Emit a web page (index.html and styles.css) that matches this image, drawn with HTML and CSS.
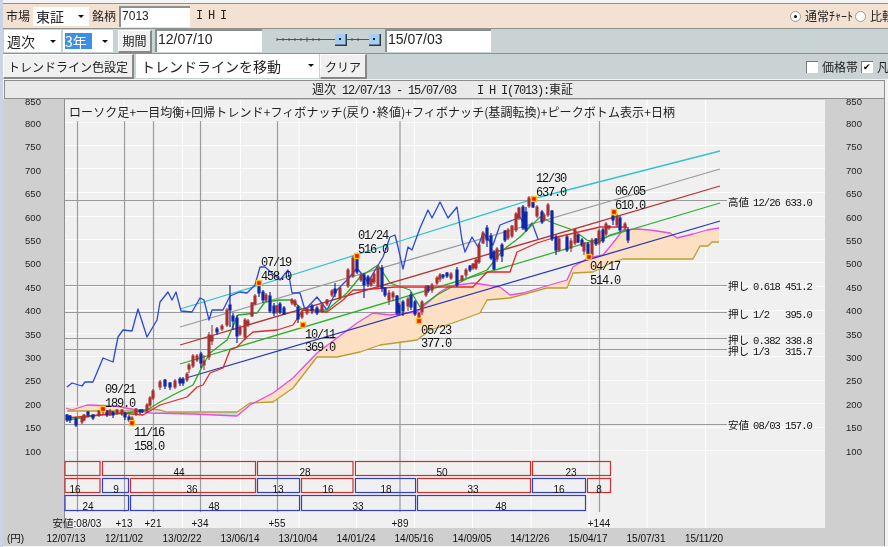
FILE: index.html
```html
<!DOCTYPE html>
<html lang="ja">
<head>
<meta charset="utf-8">
<title>チャート</title>
<link rel="stylesheet" href="styles.css">
</head>
<body>
<div class="app">
  <div class="bar bar-market">
    <span class="lbl market-lbl">市場</span>
    <div class="sel sel-market"><span>東証</span><i class="arrow"></i></div>
    <span class="lbl">銘柄</span>
    <div class="field code">7013</div>
    <span class="name">I H I</span>
    <div class="spring"></div>
    <span class="radio on"></span><span class="lbl radio-lbl">通常ﾁｬｰﾄ</span>
    <span class="radio"></span><span class="lbl last-a">比較</span>
  </div>
  <div class="bar bar-period">
    <div class="sel sel-cycle"><span>週次</span><i class="arrow"></i></div>
    <div class="sel sel-span"><span class="picked">3年</span><i class="arrow"></i></div>
    <div class="btn btn-period">期間</div>
    <div class="field date">12/07/10</div>
    <svg class="slider" viewBox="0 0 122 24" width="122" height="24">
      <path class="slider-track" d="M15 10.5H110M15 9v3M21 9v3M27 9v3M33 9v3M39 9v3M45 8v5M51 9v3M57 9v3M90 9v3M96 9v3"/>
      <rect class="knob-shade" x="73" y="5" width="12" height="12"/><rect class="knob" x="73" y="5" width="10.500" height="10.500"/><rect class="knob-dot" x="77" y="9" width="2" height="2"/>
      <rect class="knob-shade" x="107" y="5" width="12" height="12"/><rect class="knob" x="107" y="5" width="10.500" height="10.500"/><rect class="knob-dot" x="111" y="9" width="2" height="2"/>
    </svg>
    <div class="field date date-end">15/07/03</div>
  </div>
  <div class="bar bar-tool">
    <div class="btn btn-color">トレンドライン色設定</div>
    <div class="sel sel-move"><span>トレンドラインを移動</span><i class="arrow"></i></div>
    <div class="btn btn-clear">クリア</div>
    <div class="spring"></div>
    <span class="check"></span><span class="lbl check-lbl">価格帯</span>
    <span class="check on">✔</span><span class="lbl last-b">凡例</span>
  </div>
  <div class="heading"><span class="jp">週次</span> 12/07/13 - 15/07/03<span class="head-name">I H I</span>(7013):<span class="jp">東証</span></div>
  <svg class="chart" viewBox="3 99 882 447" width="882" height="447">
    <rect class="plot" x="65" y="100" width="760" height="428"/>
    <path class="edge" d="M64.500 99V528M884.500 99V546"/>
    <path class="grid" d="M124 100V528M182.500 100V528M240.500 100V528M299 100V528M356.500 100V528M414.500 100V528M472.500 100V528M531 100V528M589 100V528M647 100V528M705.500 100V528M65 122.500H825M65 145.500H825M65 168.500H825M65 192.500H825M65 216.500H825M65 239.500H825M65 262.500H825M65 286.500H825M65 310.500H825M65 333.500H825M65 356.500H825M65 380.500H825M65 403.500H825M65 427.500H825M65 450.500H825"/>
    <path class="fibo" d="M77.500 121V512M124.500 121V512M153.500 121V512M200.500 121V512M277.500 121V512M400 121V512M599.500 121V512"/>
    <path class="fibo" d="M65 200.500H727M65 285.500H727M65 312.500H727M65 338.500H727M65 349.500H727M65 424.500H727"/>

    <path class="cloud" d="M66 408L87 405L137 410L150 411L150 411L137 411L67 411Z"/>
    <path class="cloud-cold" d="M150 411L167 412L237 412L237 416L193 414L150 413Z"/>
    <path class="cloud" d="M237 416L250 405L273 393L293 378L317 353L337 338L357 323L373 313L390 315L417 312L440 292L450 286L473 283L500 287L510 295L523 293L543 287L567 280L573 267L588 258L603 255L613 243L623 230L637 229L650 230L670 233L677 238L693 234L707 230L719 228L719 242L712 242L708 246L700 246L693 259L623 259L613 262L593 272L573 273L567 288L547 288L510 298L487 300L480 313L453 323L430 330L417 340L380 345L360 352L337 357L317 357L293 388L273 402L250 403L237 412Z"/>
    <path class="l-olive" d="M67 411L137 411L150 409L160 410L167 412L237 412L250 403L273 402L293 388L317 357L337 357L360 352L380 345L417 340L430 330L453 323L480 313L487 300L510 298L547 288L567 288L573 273L593 272L613 262L623 259L693 259L700 246L708 246L712 242L719 242"/>
    <path class="l-magenta" d="M66 408L72 410L87 405L115 406L137 410L150 413L193 414L237 416L250 405L273 393L293 378L317 353L337 338L357 323L373 313L390 315L417 312L440 292L450 286L473 283L500 287L510 295L523 293L543 287L567 280L573 267L588 258L603 255L613 243L623 230L637 229L650 230L670 233L677 238L693 234L707 230L719 228"/>

    <path class="l-cyan" d="M180 309L260 285L400 241L540 197L720 151"/>
    <path class="l-gray" d="M180 327L720 169"/>
    <path class="l-red" d="M180 345L720 186"/>
    <path class="l-green" d="M180 364L720 203"/>
    <path class="l-blue" d="M186 378L720 221"/>

    <path class="l-chikou" d="M67 387L72 383L82 386L85 382L93 382L103 358L113 362L118 337L123 330L132 331L138 309L147 337L157 320L160 302L168 292L172 300L176 292L181 311L192 312L200 298L204 300L209 320L212 310L223 310L230 296L240 292L247 293L255 285L260 267L265 267L280 280L288 270L292 293L300 293L305 310L317 297L327 310L337 290L347 280L357 268L368 282L383 257L390 237L395 235L398 247L403 269L408 247L412 250L420 228L428 210L432 218L440 202L448 218L457 207L462 240L465 252L472 237L478 247L483 233L493 245L500 225L513 220L520 217L527 230L532 223L538 239"/>
    <path class="l-tenkan" d="M67 420L100 415L127 413L147 410L160 402L173 395L193 385L203 365L210 353L227 340L238 315L257 313L265 302L280 300L292 300L303 310L327 310L347 293L360 277L378 265L390 283L410 290L420 307L437 295L470 277L487 270L503 250L520 237L540 217L553 223L573 230L587 240L597 243L610 235L627 230"/>
    <path class="l-kijun" d="M67 418L120 413L143 415L160 405L187 397L197 387L203 385L210 373L223 368L230 350L237 347L247 337L253 332L277 330L293 325L303 310L327 312L343 300L353 290L360 290L395 287L415 287L473 287L487 272L510 272L517 252L537 243L553 238L600 227L627 227"/>

    <path class="candle-b" d="M67 414V422M66 415h2V420h-2zM70 415V423M69 416h2V420h-2zM76 417V427M75 419h2V425h-2zM88 411V417M87 412h2V415h-2zM93 414V420M92 415h2V418h-2zM107 410V417M106 411h2V415h-2zM113 411V418M112 412h2V415h-2zM125 412V420M124 413h2V417h-2zM129 415V422M128 417h2V420h-2zM140 409V414M139 410h2V412h-2zM142 409V413M141 410h2V412h-2zM165 379V389M164 380h2V386h-2zM170 382V390M169 383h2V387h-2zM180 377V386M179 379h2V383h-2zM183 377V386M182 379h2V383h-2zM201 352V368M200 354h2V363h-2zM217 327V335M216 329h2V332h-2zM230 285V327M229 305h2V310h-2zM233 313V330M232 316h2V321h-2zM237 315V343M236 318h2V336h-2zM259 283V297M258 285h2V293h-2zM263 290V303M262 292h2V300h-2zM270 292V313M269 296h2V311h-2zM274 303V316M273 306h2V313h-2zM280 302V314M279 304h2V312h-2zM284 306V315M283 308h2V314h-2zM298 305V323M297 307h2V319h-2zM312 304V314M311 306h2V310h-2zM317 306V315M316 308h2V313h-2zM335 283V297M334 289h2V293h-2zM357 256V274M356 257h2V272h-2zM364 273V298M363 275h2V285h-2zM368 275V287M367 277h2V284h-2zM382 265V292M381 268h2V288h-2zM385 287V297M384 288h2V295h-2zM397 295V315M396 296h2V313h-2zM399 303V315M398 305h2V313h-2zM403 300V316M402 302h2V311h-2zM411 292V310M410 295h2V307h-2zM415 300V316M414 302h2V314h-2zM428 285V293M427 287h2V291h-2zM443 274V279M442 275h2V277h-2zM447 272V278M446 273h2V276h-2zM457 267V287M456 270h2V285h-2zM470 265V272M469 266h2V270h-2zM487 225V247M486 228h2V240h-2zM491 233V260M490 236h2V258h-2zM494 250V270M493 252h2V269h-2zM502 243V262M501 245h2V256h-2zM505 230V242M504 231h2V240h-2zM523 205V230M522 207h2V228h-2zM526 207V232M525 212h2V230h-2zM533 199V208M532 200h2V207h-2zM542 210V224M541 212h2V222h-2zM552 210V241M551 211h2V239h-2zM556 235V255M555 237h2V250h-2zM567 235V252M566 237h2V250h-2zM578 234V243M577 235h2V242h-2zM582 238V247M581 240h2V245h-2zM588 242V257M587 244h2V256h-2zM596 238V246M595 239h2V244h-2zM603 228V243M602 230h2V241h-2zM613 212V225M612 216h2V220h-2zM620 216V232M619 218h2V230h-2zM628 227V243M627 230h2V240h-2z"/>
    <path class="candle-r" d="M82 416V424M81 418h2V422h-2zM84 414V421M83 415h2V420h-2zM99 410V417M98 411h2V415h-2zM103 407V414M102 408h2V412h-2zM110 409V416M109 411h2V415h-2zM117 409V415M116 410h2V413h-2zM122 409V416M121 410h2V414h-2zM132 416V425M131 418h2V423h-2zM136 408V416M135 409h2V414h-2zM147 403V413M146 405h2V411h-2zM150 396V407M149 398h2V405h-2zM153 389V400M152 391h2V398h-2zM160 380V390M159 382h2V387h-2zM175 379V389M174 381h2V387h-2zM187 372V382M186 374h2V380h-2zM189 363V373M188 365h2V369h-2zM193 354V368M192 356h2V366h-2zM197 354V362M196 356h2V360h-2zM204 355V370M203 361h2V365h-2zM209 332V360M208 335h2V357h-2zM212 325V345M211 336h2V341h-2zM222 324V331M221 326h2V329h-2zM227 308V327M226 310h2V325h-2zM240 325V336M239 328h2V334h-2zM245 318V340M244 320h2V337h-2zM248 319V327M247 321h2V325h-2zM252 302V317M251 303h2V316h-2zM255 294V305M254 296h2V304h-2zM266 293V302M265 295h2V300h-2zM277 305V314M276 306h2V312h-2zM292 298V305M291 300h2V303h-2zM295 299V307M294 301h2V305h-2zM302 310V319M301 312h2V317h-2zM307 307V315M306 308h2V313h-2zM322 304V313M321 305h2V311h-2zM327 299V306M326 300h2V304h-2zM332 289V297M331 291h2V295h-2zM340 287V300M339 288h2V298h-2zM348 268V288M347 270h2V286h-2zM353 256V278M352 258h2V276h-2zM361 273V282M360 275h2V280h-2zM371 277V287M370 279h2V285h-2zM374 272V284M373 274h2V282h-2zM378 265V288M377 268h2V286h-2zM389 290V305M388 293h2V300h-2zM393 291V301M392 293h2V297h-2zM408 297V311M407 299h2V306h-2zM419 312V322M418 313h2V317h-2zM422 300V315M421 302h2V312h-2zM426 285V297M425 287h2V295h-2zM432 283V293M431 285h2V290h-2zM437 276V285M436 278h2V283h-2zM440 273V282M439 275h2V279h-2zM451 272V280M450 274h2V278h-2zM462 275V282M461 276h2V280h-2zM466 268V278M465 270h2V275h-2zM473 263V270M472 264h2V268h-2zM476 258V270M475 260h2V268h-2zM479 243V264M478 245h2V262h-2zM483 231V244M482 233h2V243h-2zM497 247V262M496 249h2V259h-2zM508 228V240M507 230h2V238h-2zM512 225V238M511 226h2V236h-2zM516 212V232M515 214h2V230h-2zM519 207V220M518 208h2V218h-2zM529 196V208M528 198h2V206h-2zM537 205V218M536 207h2V216h-2zM544 213V222M543 215h2V220h-2zM548 203V217M547 205h2V215h-2zM559 237V252M558 239h2V250h-2zM571 238V252M570 241h2V248h-2zM575 228V245M574 230h2V243h-2zM584 242V255M583 243h2V251h-2zM592 238V258M591 240h2V255h-2zM599 229V245M598 231h2V243h-2zM609 225V230M608 226h2V228h-2zM606 222V236M605 224h2V234h-2zM625 222V230M624 224h2V228h-2zM617 214V227M616 216h2V225h-2z"/>

    <g class="marks">
      <rect x="100.500" y="406.500" width="5" height="5"/><rect x="129.500" y="420.500" width="5" height="5"/>
      <rect x="256.500" y="280.500" width="5" height="5"/><rect x="300.500" y="322.500" width="5" height="5"/>
      <rect x="354.500" y="253.500" width="5" height="5"/><rect x="416.500" y="318.500" width="5" height="5"/>
      <rect x="531.500" y="196.500" width="5" height="5"/><rect x="586.500" y="254.500" width="5" height="5"/>
      <rect x="611.500" y="209.500" width="5" height="5"/>
    </g>

    <text class="title" x="69" y="117" textLength="606">ローソク足+一目均衡+回帰トレンド+フィボナッチ(戻り･終値)+フィボナッチ(基調転換)+ピークボトム表示+日柄</text>

    <g class="mono">
      <text x="105" y="393">09/21</text><text x="105" y="407">189.0</text>
      <text x="134" y="436">11/16</text><text x="134" y="450">158.0</text>
      <text x="261" y="266">07/19</text><text x="261" y="280">458.0</text>
      <text x="305" y="338">10/11</text><text x="305" y="351">369.0</text>
      <text x="358" y="239">01/24</text><text x="358" y="253">516.0</text>
      <text x="421" y="334">05/23</text><text x="421" y="347">377.0</text>
      <text x="536" y="182">12/30</text><text x="536" y="196">637.0</text>
      <text x="615" y="195">06/05</text><text x="615" y="209">610.0</text>
      <text x="590" y="270">04/17</text><text x="590" y="284">514.0</text>
    </g>

    <g class="side">
      <text x="728" y="206"><tspan class="jp">高値</tspan></text><text x="753" y="206">12/26</text><text x="785" y="206">633.0</text>
      <text x="728" y="290"><tspan class="jp">押し</tspan></text><text x="753" y="290">0.618</text><text x="785" y="290">451.2</text>
      <text x="728" y="318"><tspan class="jp">押し</tspan></text><text x="753" y="318">1/2</text><text x="785" y="318">395.0</text>
      <text x="728" y="344"><tspan class="jp">押し</tspan></text><text x="753" y="344">0.382</text><text x="785" y="344">338.8</text>
      <text x="728" y="355"><tspan class="jp">押し</tspan></text><text x="753" y="355">1/3</text><text x="785" y="355">315.7</text>
      <text x="728" y="429"><tspan class="jp">安値</tspan></text><text x="753" y="429">08/03</text><text x="785" y="429">157.0</text>
    </g>

    <g class="axis-l">
      <text x="33" y="105">850</text><text x="33" y="127">800</text><text x="33" y="150">750</text><text x="33" y="174">700</text><text x="33" y="197">650</text><text x="33" y="221">600</text><text x="33" y="244">550</text><text x="33" y="267">500</text><text x="33" y="291">450</text><text x="33" y="314">400</text><text x="33" y="338">350</text><text x="33" y="361">300</text><text x="33" y="384">250</text><text x="33" y="408">200</text><text x="33" y="431">150</text><text x="33" y="455">100</text>
      <text x="854" y="105">850</text><text x="854" y="127">800</text><text x="854" y="150">750</text><text x="854" y="174">700</text><text x="854" y="197">650</text><text x="854" y="221">600</text><text x="854" y="244">550</text><text x="854" y="267">500</text><text x="854" y="291">450</text><text x="854" y="314">400</text><text x="854" y="338">350</text><text x="854" y="361">300</text><text x="854" y="384">250</text><text x="854" y="408">200</text><text x="854" y="431">150</text><text x="854" y="455">100</text>
    </g>

    <g class="box-r">
      <rect x="65" y="461.500" width="35" height="14"/><rect x="102.500" y="461.500" width="153" height="14"/><rect x="257.500" y="461.500" width="95.500" height="14"/><rect x="355.500" y="461.500" width="175" height="14"/><rect x="532.500" y="461.500" width="78" height="14"/>
      <rect x="65" y="478.500" width="35" height="14"/><rect x="130.500" y="478.500" width="125" height="14"/><rect x="301.500" y="478.500" width="51.500" height="14"/><rect x="417.500" y="478.500" width="113" height="14"/><rect x="587.500" y="478.500" width="23" height="14"/>
    </g>
    <g class="box-b">
      <rect x="102.500" y="478.500" width="26" height="14"/><rect x="257.500" y="478.500" width="42" height="14"/><rect x="355.500" y="478.500" width="60" height="14"/><rect x="532.500" y="478.500" width="53" height="14"/>
      <rect x="65" y="495.500" width="63.500" height="15"/><rect x="130.500" y="495.500" width="169" height="15"/><rect x="301.500" y="495.500" width="114" height="15"/><rect x="417.500" y="495.500" width="168" height="15"/>
    </g>
    <g class="count">
      <text x="179" y="476">44</text><text x="305" y="476">28</text><text x="442" y="476">50</text><text x="571" y="476">23</text>
      <text x="75" y="493">16</text><text x="116" y="493">9</text><text x="192" y="493">36</text><text x="278" y="493">13</text><text x="328" y="493">16</text><text x="386" y="493">18</text><text x="473" y="493">33</text><text x="559" y="493">16</text><text x="599" y="493">8</text>
      <text x="88" y="510">24</text><text x="214" y="510">48</text><text x="358" y="510">33</text><text x="501" y="510">48</text>
      <text x="124" y="527">+13</text><text x="153" y="527">+21</text><text x="200" y="527">+34</text><text x="277" y="527">+55</text><text x="400" y="527">+89</text><text x="599" y="527">+144</text>
      <text x="77" y="527"><tspan class="jp">安値</tspan>:08/03</text>
    </g>
    <g class="dates">
      <text x="66" y="542">12/07/13</text><text x="124" y="542">12/11/02</text><text x="182" y="542">13/02/22</text><text x="240" y="542">13/06/14</text><text x="298" y="542">13/10/04</text><text x="356" y="542">14/01/24</text><text x="414" y="542">14/05/16</text><text x="472" y="542">14/09/05</text><text x="530" y="542">14/12/26</text><text x="588" y="542">15/04/17</text><text x="646" y="542">15/07/31</text><text x="704" y="542">15/11/20</text>
    </g>
    <text class="yen" x="7" y="542">(<tspan class="jp">円</tspan>)</text>
  </svg>
</div>
</body>
</html>
```
FILE: styles.css
```css
html, body {
  margin: 0;
  padding: 0;
  width: 888px;
  height: 547px;
  overflow: hidden;
  background: #f2f3f5;
}
.app {
  box-sizing: border-box;
  width: 888px;
  height: 547px;
  padding: 3px 3px 0 3px;
  background: linear-gradient(90deg, #c9d5e6 0, #c9d5e6 3px, #f4f4f4 3px);
  display: flex;
  flex-direction: column;
  font-family: "Noto Sans CJK JP", "Liberation Sans", sans-serif;
  font-size: 12px;
  color: #222;
  overflow: hidden;
  filter: blur(.35px);
}
.bar {
  display: flex;
  align-items: center;
  flex: none;
  border-top: 1px solid #8d9393;
  box-sizing: border-box;
}
.bar-market {
  height: 25px;
  background: #f3e1d2;
  margin-right: -3px;
}
.bar-period {
  height: 25px;
  background: #c9d3d3;
  margin-right: -3px;
}
.bar-tool {
  height: 26px;
  background: #c9d3d3;
  margin-right: -3px;
}
.lbl { white-space: nowrap; line-height: 14px; }
.market-lbl { margin-left: 3px; margin-right: 3px; }
.spring { flex: 1; }
.last-a { margin-right: -6px; }
.last-b { margin-right: -13px; }
.sel {
  position: relative;
  box-sizing: border-box;
  background: #fff;
  height: 19px;
  display: flex;
  align-items: center;
  padding-left: 3px;
  font-size: 14px;
  line-height: 16px;
}
.sel .arrow {
  position: absolute;
  right: 5px;
  top: 8px;
  width: 0;
  height: 0;
  border: 3.5px solid transparent;
  border-top-color: #111;
  border-bottom: 0;
}
.bar-period .sel .arrow { top: 10px; }
.sel-move .arrow { top: 10px; }
.sel-market { width: 56px; margin-right: 3px; }
.field {
  box-sizing: border-box;
  background: #fff;
  border-top: 2px solid #8b8f8f;
  border-left: 2px solid #8b8f8f;
  font-family: "Liberation Sans", sans-serif;
  line-height: 16px;
  white-space: nowrap;
}
.code {
  width: 71px;
  height: 21px;
  margin-left: 3px;
  padding-left: 1px;
  font-size: 12px;
}
.name {
  margin-left: 6px;
  font-family: "Liberation Mono", monospace;
  font-size: 12px;
  letter-spacing: -1.2px;
  white-space: pre;
}
.radio {
  box-sizing: border-box;
  width: 11px;
  height: 11px;
  border-radius: 50%;
  background: #fff;
  border: 1px solid #9a9a9a;
  margin-right: 4px;
  position: relative;
}
.radio.on::after {
  content: "";
  position: absolute;
  left: 3px;
  top: 3px;
  width: 3px;
  height: 3px;
  border-radius: 50%;
  background: #111;
}
.radio-lbl { margin-right: 2px; }
.bar-period .sel { height: 22px; }
.sel-cycle { width: 57px; margin-left: 1px; margin-right: 2px; }
.sel-span { width: 50px; padding-left: 2px; }
.picked {
  background: #3c8fe8;
  color: #fff;
  width: 27px;
  line-height: 16px;
}
.btn {
  box-sizing: border-box;
  height: 23px;
  display: flex;
  align-items: center;
  justify-content: center;
  background: #f0f0f0;
  border-right: 2px solid #888;
  border-bottom: 2px solid #888;
  border-top: 1px solid #fff;
  border-left: 1px solid #fff;
  white-space: nowrap;
}
.btn-period { width: 34px; margin-left: 5px; margin-right: 3px; }
.date {
  width: 107px;
  height: 23px;
  padding-left: 1px;
  font-size: 14px;
  align-self: flex-start;
}
.slider { flex: none; display: block; }
.slider-track { fill: none; stroke: #555; stroke-width: 1; }
.knob { fill: #a9cdf2; }
.knob-shade { fill: #2c3a44; }
.knob-dot { fill: #123; }
.date-end { width: 106px; margin-left: 1px; }
.bar-tool .btn { height: 25px; align-self: flex-start; }
.btn-color { width: 131px; margin-right: 2px; }
.sel-move { width: 183px; height: 24px; align-self: flex-start; padding-left: 5px; }
.btn-clear { width: 47px; margin-left: 1px; }
.check {
  box-sizing: border-box;
  width: 12px;
  height: 12px;
  background: #fff;
  border-top: 1px solid #777;
  border-left: 1px solid #777;
  margin-right: 4px;
  font-size: 9px;
  line-height: 10px;
  text-align: center;
  color: #000;
}
.check-lbl { margin-right: 3px; }
.heading {
  flex: none;
  box-sizing: border-box;
  height: 19px;
  margin: 1px 0 0 1px;
  background: #e9e9e9;
  border: 1px solid #8d8d8d;
  padding-left: 307px;
  font-family: "Liberation Mono", monospace;
  font-size: 12px;
  letter-spacing: -1.2px;
  line-height: 16px;
  white-space: pre;
  overflow: hidden;
}
.heading .jp {
  font-family: "Noto Sans CJK JP", sans-serif;
  font-size: 12px;
  letter-spacing: 0;
}
.head-name { margin-left: 21px; }
.chart { display: block; flex: none; background: #cfcfcf; }
.plot { fill: #f0f0f0; }
.edge { fill: none; stroke: #8f8f8f; stroke-width: 1; }
.grid { fill: none; stroke: #fff; stroke-width: 1; }
.fibo { fill: none; stroke: #9a9a9a; stroke-width: 1.2; }
.cloud { fill: #fddfc4; stroke: none; }
.cloud-cold { fill: #bcdcf0; stroke: none; }
.l-olive, .l-magenta, .l-cyan, .l-gray, .l-red, .l-green, .l-blue, .l-chikou, .l-tenkan, .l-kijun {
  fill: none;
  stroke-width: 1.3;
  stroke-linejoin: round;
}
.l-olive { stroke: #b8a030; }
.l-magenta { stroke: #e84ce0; }
.l-cyan { stroke: #30c4cc; }
.l-gray { stroke: #9a9a9a; }
.l-red { stroke: #b83030; }
.l-green { stroke: #30b030; }
.l-blue { stroke: #2838b8; }
.l-chikou { stroke: #2a48e0; }
.l-tenkan { stroke: #28a828; }
.l-kijun { stroke: #e02828; }
.candle-b { fill: #1028a8; stroke: #1028a8; stroke-width: 1.2; }
.candle-r { fill: #e8b4a4; stroke: #a83030; stroke-width: 1.1; }
.marks rect { fill: #e81800; stroke: #ffc000; stroke-width: 1.4; }
.title {
  font-family: "Noto Sans CJK JP", sans-serif;
  font-size: 12px;
  fill: #222;
}
.mono text {
  font-family: "Liberation Mono", monospace;
  font-size: 12px;
  letter-spacing: -1.2px;
  fill: #111;
}
.side text {
  font-family: "Liberation Mono", monospace;
  font-size: 10.5px;
  letter-spacing: -.9px;
  fill: #111;
}
.side .jp, .count .jp, .yen .jp {
  font-family: "Noto Sans CJK JP", sans-serif;
  font-size: 10.5px;
  letter-spacing: 0;
}
.axis-l text {
  font-family: "Liberation Sans", sans-serif;
  font-size: 9.5px;
  text-anchor: middle;
  fill: #222;
}
.box-r rect, .box-b rect { fill: none; stroke-width: 1.2; }
.box-r rect { stroke: #c83030; }
.box-b rect { stroke: #3040c8; }
.count text {
  font-family: "Liberation Sans", sans-serif;
  font-size: 10px;
  text-anchor: middle;
  fill: #111;
}
.dates text {
  font-family: "Liberation Sans", sans-serif;
  font-size: 10px;
  text-anchor: middle;
  fill: #111;
}
.yen {
  font-family: "Liberation Sans", sans-serif;
  font-size: 10px;
  fill: #111;
}
```
